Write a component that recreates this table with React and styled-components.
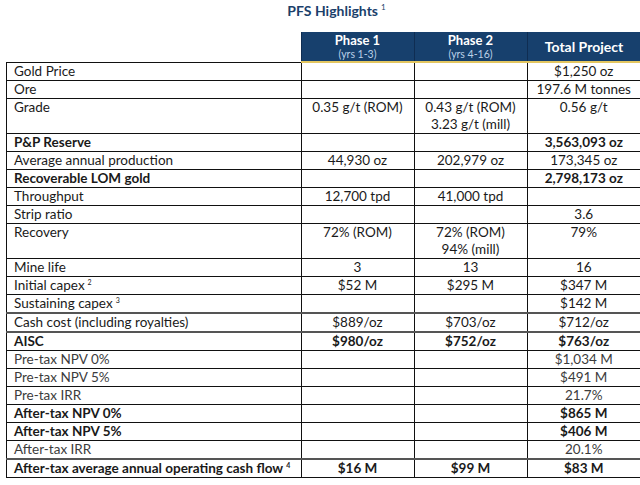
import React from "react";
import styled, { createGlobalStyle } from "styled-components";

const GlobalStyle = createGlobalStyle`
  body {
    margin: 0;
    background: #fff;
    font-family: Lato, "Open Sans", sans-serif;
  }
`;

const Page = styled.div`
  width: 640px;
  padding: 3px 3px 0 6px;
  box-sizing: border-box;
`;

const Title = styled.h1`
  margin: 0 0 13px 0;
  text-align: center;
  font-size: 14px;
  font-weight: 700;
  color: #1b3f6b;
  padding-left: 30px;
  line-height: 16px;

  sup {
    font-size: 8px;
    font-weight: 400;
    margin-left: 3px;
    line-height: 0;
  }
`;

const Table = styled.table`
  border-collapse: collapse;
  table-layout: fixed;
  width: 631px;
  font-size: 13.5px;
  color: #1a1a1a;
`;

const HeadBlank = styled.th`
  width: 294px;
  padding: 0;
`;

const HeadCell = styled.th`
  width: ${(p) => p.$w}px;
  height: 29px;
  padding: 0;
  background: #17406d;
  color: #fff;
  font-weight: 700;
  font-size: ${(p) => (p.$big ? 14 : 13)}px;
  line-height: 15px;
  text-align: center;
  vertical-align: middle;
  border-left: 1px solid #0f2d52;
  border-bottom: 2px solid #e3c660;
`;

const Years = styled.div`
  font-size: 10.5px;
  font-weight: 400;
  color: #bcd0e8;
  line-height: 12px;
`;

const Row = styled.tr`
  border-top: ${(p) => (p.$heavy ? "2px solid #555" : "1px solid #111")};

  td {
    height: ${(p) => (p.$double ? 34 : 16.6)}px;
  }
`;

const Label = styled.td`
  padding: 0 0 0 7px;
  border-left: 1px solid #111;
  border-right: 1px solid #111;
  border-bottom: 1px solid #111;
  font-weight: ${(p) => (p.$bold ? 700 : 400)};
  color: ${(p) => (p.$muted ? "#3c3c3c" : "#1a1a1a")};
  vertical-align: top;
  line-height: 17px;
  white-space: nowrap;

  sup {
    font-size: 7px;
    margin-left: 3px;
    vertical-align: top;
    line-height: 10px;
  }
`;

const Value = styled.td`
  padding: 0;
  text-align: center;
  border-right: 1px solid #111;
  border-bottom: 1px solid #111;
  font-weight: ${(p) => (p.$bold ? 700 : 400)};
  color: ${(p) => (p.$muted ? "#3c3c3c" : "#1a1a1a")};
  vertical-align: top;
  line-height: 17px;
  white-space: nowrap;
`;

const rows = [
  { label: "Gold Price", v: ["", "", "$1,250 oz"] },
  { label: "Ore", v: ["", "", "197.6 M tonnes"] },
  { label: "Grade", v: ["0.35 g/t (ROM)", ["0.43 g/t (ROM)", "3.23 g/t (mill)"], "0.56 g/t"], double: true },
  { label: "P&P Reserve", v: ["", "", "3,563,093 oz"], bold: true },
  { label: "Average annual production", v: ["44,930 oz", "202,979 oz", "173,345 oz"] },
  { label: "Recoverable LOM gold", v: ["", "", "2,798,173 oz"], bold: true },
  { label: "Throughput", v: ["12,700 tpd", "41,000 tpd", ""] },
  { label: "Strip ratio", v: ["", "", "3.6"] },
  { label: "Recovery", v: ["72% (ROM)", ["72% (ROM)", "94% (mill)"], "79%"], double: true },
  { label: "Mine life", v: ["3", "13", "16"] },
  { label: "Initial capex", sup: "2", v: ["$52 M", "$295 M", "$347 M"] },
  { label: "Sustaining capex", sup: "3", v: ["", "", "$142 M"] },
  { label: "Cash cost (including royalties)", v: ["$889/oz", "$703/oz", "$712/oz"], heavy: true },
  { label: "AISC", v: ["$980/oz", "$752/oz", "$763/oz"], bold: true, heavy: true },
  { label: "Pre-tax NPV 0%", v: ["", "", "$1,034 M"], muted: true },
  { label: "Pre-tax NPV 5%", v: ["", "", "$491 M"], muted: true },
  { label: "Pre-tax IRR", v: ["", "", "21.7%"], muted: true },
  { label: "After-tax NPV 0%", v: ["", "", "$865 M"], bold: true },
  { label: "After-tax NPV 5%", v: ["", "", "$406 M"], bold: true },
  { label: "After-tax IRR", v: ["", "", "20.1%"], muted: true },
  { label: "After-tax average annual operating cash flow", sup: "4", v: ["$16 M", "$99 M", "$83 M"], bold: true, heavy: true },
];

const renderValue = (val) =>
  Array.isArray(val) ? (
    <>
      {val[0]}
      <br />
      {val[1]}
    </>
  ) : (
    val
  );

export default function App() {
  return (
    <Page>
      <GlobalStyle />
      <Title>
        PFS Highlights<sup>1</sup>
      </Title>
      <Table>
        <thead>
          <tr>
            <HeadBlank />
            <HeadCell $w={112}>
              Phase 1<Years>(yrs 1-3)</Years>
            </HeadCell>
            <HeadCell $w={112}>
              Phase 2<Years>(yrs 4-16)</Years>
            </HeadCell>
            <HeadCell $w={113} $big>
              Total Project
            </HeadCell>
          </tr>
        </thead>
        <tbody>
          {rows.map((r) => (
            <Row key={r.label} $double={r.double} $heavy={r.heavy}>
              <Label $bold={r.bold} $muted={r.muted}>
                {r.label}
                {r.sup && <sup>{r.sup}</sup>}
              </Label>
              {r.v.map((val, i) => (
                <Value key={i} $bold={r.bold} $muted={r.muted}>
                  {renderValue(val)}
                </Value>
              ))}
            </Row>
          ))}
        </tbody>
      </Table>
    </Page>
  );
}
